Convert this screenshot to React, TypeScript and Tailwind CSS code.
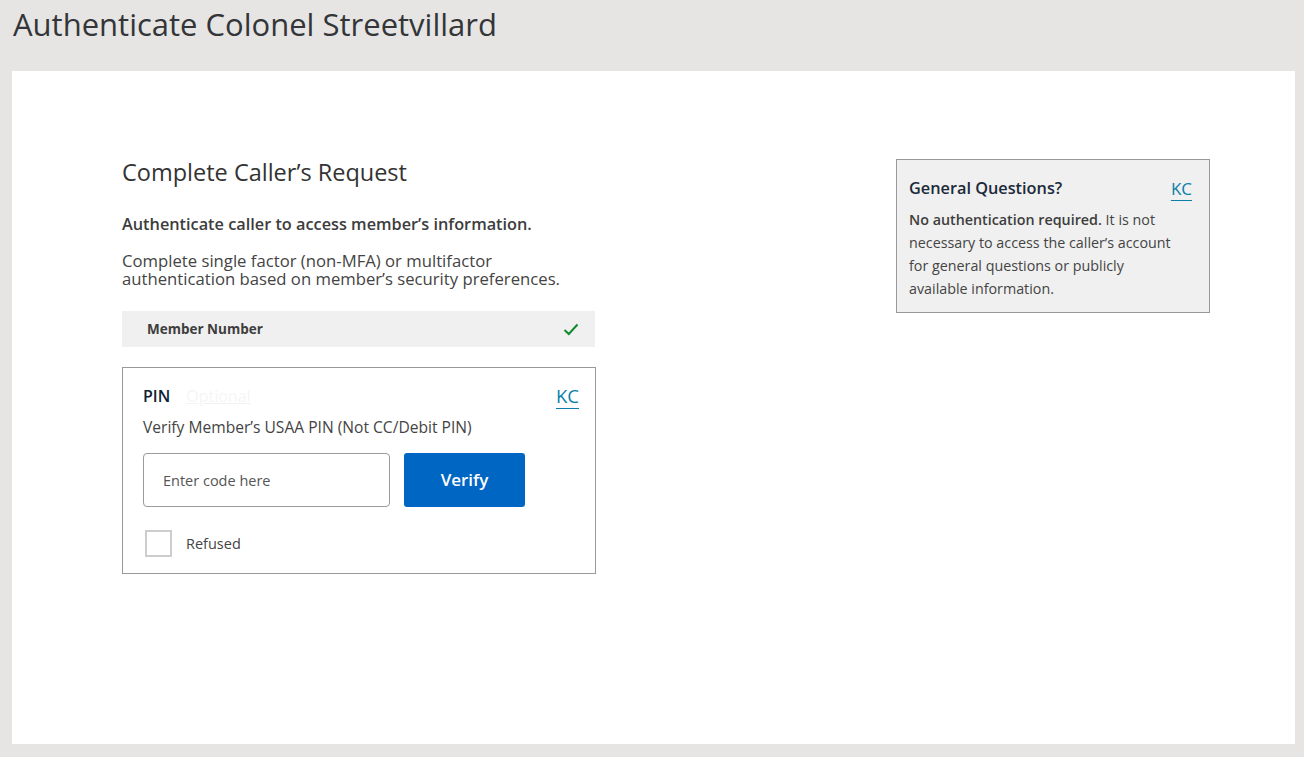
import React, { useState } from 'react';

const font = { fontFamily: '"Open Sans", "Noto Sans", sans-serif' };

function KcLink({ size }: { size: string }) {
    return (
        <a href="#" className={`${size} leading-none text-[#0a7fa8] underline underline-offset-[5px] decoration-1`}>
            KC
        </a>
    );
}

export default function App() {
    const [refused, setRefused] = useState(false);

    return (
        <div className="min-h-[757px] w-full bg-[#e6e5e3] px-3 pb-[13px]" style={font}>
            {/* Page Title */}
            <h1 className="h-[71px] pt-[5px] pl-px text-[31px] leading-[38px] text-[#333538]">
                Authenticate Colonel Streetvillard
            </h1>

            {/* Content Panel */}
            <div className="mr-[-3px] flex h-[673px] bg-white pl-[110px] pt-[86px]">
                {/* Left Column */}
                <div className="w-[474px]">
                    <h2 className="text-[23.5px] leading-[30px] text-[#333]">Complete Caller’s Request</h2>
                    <p className="mt-[27px] text-[16.3px] font-semibold leading-[20px] text-[#3d3d3d]">
                        Authenticate caller to access member’s information.
                    </p>
                    <p className="mt-[18px] text-[16.7px] leading-[18px] text-[#444]">
                        Complete single factor (non-MFA) or multifactor authentication based on member’s security preferences.
                    </p>

                    {/* Member Number Row */}
                    <div className="mt-[23px] mr-px flex h-[36px] items-center justify-between bg-[#f0f0f0] pl-[25px] pr-[16px]">
                        <span className="text-[13.5px] font-bold text-[#3d3d3d]">Member Number</span>
                        <svg width="16" height="13" viewBox="0 0 16 13" fill="none">
                            <path d="M1.5 7 L5.8 11 L14.5 1.5" stroke="#118a2e" strokeWidth="2" />
                        </svg>
                    </div>

                    {/* PIN Card */}
                    <div className="mt-[20px] h-[207px] border border-[#999] pl-5 pr-4 pt-[16px]">
                        <div className="flex items-center justify-between">
                            <div className="flex items-baseline gap-4">
                                <span className="text-[16px] font-semibold text-[#0f2233]">PIN</span>
                                <span className="text-[16px] text-[#f6f6f6] underline decoration-[#f2f2f2]">Optional</span>
                            </div>
                            <KcLink size="text-[18.5px]" />
                        </div>
                        <p className="mt-[10px] text-[15.6px] leading-[18px] text-[#444]">
                            Verify Member’s USAA PIN (Not CC/Debit PIN)
                        </p>
                        <div className="mt-[17px] flex gap-[14px]">
                            <input
                                type="text"
                                placeholder="Enter code here"
                                className="h-[54px] w-[247px] rounded-[4px] border border-[#9a9a9a] px-[19px] text-[14.5px] text-[#333] placeholder-[#555] outline-none"
                                style={font}
                            />
                            <button className="h-[54px] w-[121px] rounded-[3px] bg-[#0066c4] text-[17px] font-semibold text-white">
                                Verify
                            </button>
                        </div>
                        <label className="mt-[23px] flex cursor-pointer items-center gap-[14px] pl-[2px]">
                            <span
                                onClick={() => setRefused(!refused)}
                                className="h-[27px] w-[27px] border-2 border-[#cdcdcd] bg-white"
                            />
                            <span className="text-[14.5px] text-[#444]">Refused</span>
                        </label>
                    </div>
                </div>

                {/* Right Column */}
                <div className="ml-[300px] mt-[2px]">
                    <div className="h-[154px] w-[314px] border border-[#999] bg-[#f0f0f0] pl-[12px] pr-[17px] pt-[16px]">
                        <div className="flex items-center justify-between">
                            <h3 className="text-[16.3px] font-semibold text-[#1b2a3a]">General Questions?</h3>
                            <KcLink size="text-[17px]" />
                        </div>
                        <p className="mt-[8px] pr-[10px] text-[14.3px] leading-[23px] text-[#444]">
                            <b className="font-semibold text-[#3d3d3d]">No authentication required.</b> It is not necessary to access the caller’s account for general questions or publicly available information.
                        </p>
                    </div>
                </div>
            </div>
        </div>
    );
}
